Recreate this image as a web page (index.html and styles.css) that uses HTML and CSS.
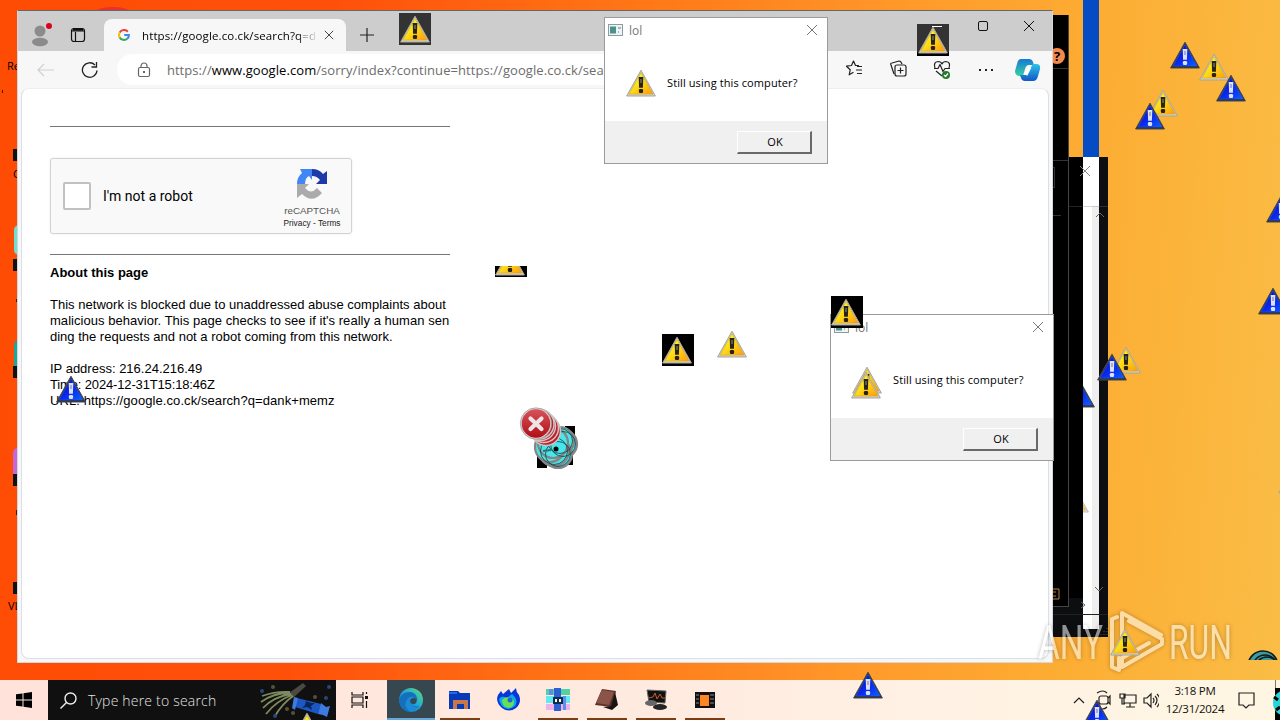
FILE: index.html
```html
<!DOCTYPE html>
<html lang="en">
<head>
	<meta charset="UTF-8">
	<title>Desktop</title>
	<link rel="stylesheet" href="styles.css">
</head><body>
<svg width="0" height="0" class="defs">
	<defs>
		<linearGradient id="gy" x1="0" y1="0" x2="1" y2="1"><stop offset=".2" stop-color="#f8ff18"/><stop offset=".55" stop-color="#ffd414"/><stop offset="1" stop-color="#ff9a10"/></linearGradient>
		<linearGradient id="gb" x1="0" y1="0" x2="1" y2="1"><stop offset=".2" stop-color="#0a10c8"/><stop offset=".6" stop-color="#0b2ff2"/><stop offset="1" stop-color="#0a60ff"/></linearGradient>
		<linearGradient id="gr" x1="0" y1="0" x2="0" y2="1"><stop offset="0" stop-color="#d8545c"/><stop offset="1" stop-color="#b00c16"/></linearGradient>
		<linearGradient id="ge" x1="0" y1="1" x2="1" y2="0"><stop offset="0" stop-color="#0c5fb5"/><stop offset=".5" stop-color="#1fa2dc"/><stop offset="1" stop-color="#5fe070"/></linearGradient>
		<linearGradient id="gc1" x1="0" y1="0" x2="0" y2="1"><stop offset="0" stop-color="#1778d8"/><stop offset="1" stop-color="#35d1a0"/></linearGradient>
		<linearGradient id="gc2" x1="0" y1="0" x2="0" y2="1"><stop offset="0" stop-color="#2cc4e8"/><stop offset="1" stop-color="#1257c8"/></linearGradient>
		<symbol id="warn" viewBox="0 0 32 32">
			<path d="M16 3.2 30.4 29H1.6z" fill="#d2cec2" stroke="#aaa69a" stroke-width="1" stroke-linejoin="round"/>
			<path d="M16 5.8 28 27H4z" fill="url(#gy)" stroke="#d09c10" stroke-width=".5"/>
			<path d="M13.700 10h4.600l-.4 10.800h-3.800z" fill="#26231a"/><path d="M15 12h2v4h-2z" fill="#5c584a"/>
			<rect x="13.900" y="22" width="4.200" height="4" rx="1.200" fill="#26231a"/>
		</symbol>
		<symbol id="inv" viewBox="0 0 32 32">
			<path d="M16 3.2 30.4 29H1.6z" fill="#2b2f3c" stroke="#45484f" stroke-width="1" stroke-linejoin="round"/>
			<path d="M16 5.8 28 27H4z" fill="url(#gb)" stroke="#2f63ef" stroke-width=".5"/>
			<path d="M13.700 10h4.600l-.4 10.800h-3.800z" fill="#dde1f4"/><path d="M15 12h2v4h-2z" fill="#a5abd4"/>
			<rect x="13.900" y="22" width="4.200" height="4" rx="1.200" fill="#dde1f4"/>
		</symbol>
		<symbol id="x" viewBox="0 0 12 12"><path d="M1 1 11 11M11 1 1 11" fill="none" stroke="currentColor"/></symbol>
		<symbol id="app" viewBox="0 0 15 12">
			<rect x=".5" y=".5" width="14" height="11" fill="#eef4f5" stroke="#8d9c9e"/>
			<rect x="2" y="2.5" width="6" height="7" fill="#4a9290"/><path d="M10 3h3v2h-3zM10 7h1v2h-1z" fill="#a8b8ba"/>
		</symbol>
	</defs>
</svg>

<div class="desktop">
	<div class="stripe"></div>
	<div class="icon-labels">
		<i class="profile-dot"></i>
		<span class="l1">Re</span><span class="l2">C</span><span class="l3">VL</span>
		<i class="sc s1"></i><i class="blob b1"></i><i class="sc s2"></i><i class="blob b2"></i><i class="sc s3"></i><i class="blob b3"></i><i class="sc s4"></i><i class="sc s5"></i>
		<i class="tick k1"></i><i class="tick k2"></i><i class="tick k3"></i>
	</div>

	<!-- windows left behind the browser -->
	<div class="win dark2">
		<i class="strip"></i><i class="scroll"></i><i class="rule"></i>
		<svg class="layer" width="56" height="480" fill="none">
			<path d="M28 9l10 10m0-10-10 10" stroke="#888"/>
			<path d="M44 60l4-4 4 4M43 430l4 4 4-4M29 445l4 3-4 3" stroke="#666"/>
			<path d="M0 457.500h56" stroke="#222"/>
			<path d="M49 478v-2m3 2v-6m3 6v-9" stroke="#555" stroke-dasharray="1 2"/>
		</svg>
	</div>
	<div class="win dark1"><b class="help">?</b><i class="rule r1"></i><i class="rule r2"></i><i class="box"></i><i class="rule r3"></i>
		<svg class="list" width="20" height="12" fill="none"><path d="M0 1h19v10H0M8 4h8M8 8h8" stroke="#b87a38"/></svg>
	</div>

	<div class="win browser">
		<div class="tabs">
			<svg class="profile" width="26" height="26"><circle cx="11" cy="9" r="5.5" fill="#8b8b8b"/><ellipse cx="11" cy="20" rx="8" ry="4.2" fill="#8b8b8b"/><circle cx="20" cy="4" r="3" fill="#d8041c"/></svg>
			<svg class="workspace" width="16" height="16" fill="none" stroke="#111" stroke-width="1.2"><rect x="1.5" y="1.5" width="13" height="13" rx="2.5"/><path d="M1.5 4h13M5.5 5v9" /><path d="M3 2.5h10" stroke-width="2.5"/></svg>
			<div class="tab">
				<svg width="12" height="12" viewBox="0 0 12 12" fill="none" stroke-width="2.1"><path d="M9.8 2.7A5 5 0 0 0 1.7 3.6" stroke="#ea4335"/><path d="M1.7 3.6A5 5 0 0 0 1.7 8.4" stroke="#fbbc05"/><path d="M1.7 8.4A5 5 0 0 0 9.2 9.8" stroke="#34a853"/><path d="M9.2 9.8A5 5 0 0 0 10.9 6H6.2" stroke="#4285f4"/></svg>
				<span class="tab-title">https://google.co.ck/search?q=d</span>
				<svg width="10" height="10" class="tab-x"><use href="#x"/></svg>
			</div>
			<svg class="plus" width="14" height="14" stroke="#222"><path d="M7 0v14M0 7h14" stroke-width="1.2"/></svg>
			<svg class="max" width="10" height="10" fill="none" stroke="#111"><rect x=".5" y=".5" width="9" height="9" rx="1.5"/></svg>
			<svg class="close" width="12" height="12"><use href="#x"/></svg>
		</div>
		<div class="toolbar">
			<svg class="back" width="17" height="14" fill="none" stroke="#d0d0d0" stroke-width="1.2"><path d="M17 7H1M7 1 1 7l6 6"/></svg>
			<svg class="reload" width="18" height="18" fill="none" stroke="#222" stroke-width="1.3"><path d="M16 9.5A7.3 7.3 0 1 1 14 4M15.5 1v5h-5"/></svg>
			<div class="address">
				<svg width="14" height="16" fill="none" stroke="#666" stroke-width="1.2"><rect x="1.5" y="5.5" width="11" height="9" rx="1.5"/><path d="M4 5V4a3 3 0 0 1 6 0v1"/><path d="M6 10h2" stroke-width="2"/></svg>
				<span class="url">https://<b>www.google.com</b>/sorry/index?continue=https://google.co.ck/sear</span>
			</div>
			<svg class="tools" width="210" height="32" fill="none" stroke="#222" stroke-width="1.2" stroke-linejoin="round">
				<path d="M16 9.500h-3.500L10.500 5 8.500 9.500l-5 .700 3.700 3.600-1 5 4.300-2.500M14 10.500h5M13 14h6M14 17.500h5"/>
				<path d="M51 18l-3-9q-1-2 1-2l7-2q2 0 3 3"/><rect x="52" y="9" width="11" height="11" rx="2"/><path d="M57.500 11.500v6M54.500 14.500h6"/>
				<path d="M92 12q-2-6 3-6.500 3 0 4 2.500 1-2.500 4-2.500 5 .500 3 6.500M91 12.500h4l2-4 3 7 2-3h5M93 15l6 5"/>
				<circle cx="103" cy="19" r="4" fill="#237c2a" stroke="none"/><path d="M101 19l1.500 1.500 2.500-3" stroke="#fff"/>
				<path d="M136 14h2m4 0h2m4 0h2" stroke-width="2"/>
				<path d="M178 3h8q3 0 4 3l1 3h-5q-3 0-4 4l-2 7h-3q-5 0-5-5l2-7q1-5 4-5z" fill="url(#gc1)" stroke="none"/>
				<path d="M190 8h3q5 0 4 5l-2 7q-1 5-5 5h-8q-3 0-4-3l-1-3h5q2 0 3-3z" fill="url(#gc2)" stroke="none"/>
				<path d="M187 11l-4 8" stroke="#fff" stroke-width="3"/>
			</svg>
		</div>
		<div class="page">
			<div class="content">
				<hr>
				<div class="captcha">
					<i class="check"></i><span class="robot">I'm not a robot</span>
					<div class="brand">
						<svg width="32" height="32" viewBox="0 0 32 32">
							<path d="M31 3v13H20l4-4q-3-4-8-4V1q7 0 11 5z" fill="#1c3aa9"/>
							<path d="M4 1h12v11l-3-4q-4 2-4 8H1q0-7 5-11z" fill="#4285f4"/>
							<path d="M1 16h12l-4 4q6 7 12 0l5 5q-10 11-20 1l-5 4z" fill="#ababab"/>
						</svg>
						<div class="name">reCAPTCHA</div>
						<div class="terms">Privacy - Terms</div>
					</div>
				</div>
				<hr>
				<div class="about"><b>About this page</b><br><br>
					<span class="t1">This network is blocked due to unaddressed abuse complaints about</span><br>
					<span class="t2">malicious behavior. This page checks to see if it's really a human sen</span><br>
					<span class="t3">ding the requests and not a robot coming from this network.</span><br><br>
					<span class="t4">IP address: 216.24.216.49</span><br>
					<span class="t5">Time: 2024-12-31T15:18:46Z</span><br>
					<span class="t6">URL: https://google.co.ck/search?q=dank+memz</span>
				</div>
			</div>
		</div>
	</div>

	<div class="win dialog d1">
		<div class="caption"><svg width="15" height="12"><use href="#app"/></svg><span>lol</span><svg class="cx" width="12" height="12"><use href="#x"/></svg></div>
		<div class="msg"><svg width="32" height="32"><use href="#warn"/></svg><span>Still using this computer?</span></div>
		<div class="foot"><div class="ok">OK</div></div>
	</div>
	<div class="win dialog d2">
		<div class="caption"><svg width="15" height="12"><use href="#app"/></svg><span>lol</span><svg class="cx" width="12" height="12"><use href="#x"/></svg></div>
		<div class="msg"><svg width="32" height="32"><use href="#warn"/></svg><span>Still using this computer?</span></div>
		<div class="foot"><div class="ok">OK</div></div>
	</div>

	<div class="taskbar">
		<div class="start"><svg width="16" height="16"><path d="M0 2.300 6.500 1.400V7.500H0zM7.500 1.200 16 0v7.500H7.500zM0 8.500h6.500v6.100L0 13.700zM7.500 8.500H16V16l-8.500-1.200z"/></svg></div>
		<div class="search">
			<svg width="17" height="17" fill="none" stroke="#eee" stroke-width="1.400"><circle cx="10.500" cy="6.500" r="5.500"/><path d="M6.500 10.500.500 16.500"/></svg>
			<span>Type here to search</span>
			<svg class="art" width="78" height="38">
				<path d="M31 12 45 2l3 3-13 12z" fill="#4a4a42"/>
				<path d="M32 12Q15 12 3 21M33 13Q15 16 5 27M34 14Q18 20 8 33M35 15Q24 23 17 35M32 11Q18 10 4 15" fill="none" stroke="#7d8a5c" stroke-width="1.800"/>
				<path d="M39 17l24 6-3 10-23-7z" fill="#1c58c4"/><path d="M36 16l4 1-3 12-3-2zM63 22l5 4 4-1-3 11-4-2-5-1z" fill="#3d7be0"/><path d="M48 20l5 2 4 0-4 3 1 4-5-3-5 1 3-3z" fill="#08265c"/>
				<g fill="#25477c"><circle cx="4" cy="10" r="2"/><circle cx="71" cy="6" r="2"/><circle cx="68" cy="17" r="2"/><circle cx="17" cy="35" r="2"/></g><g fill="#5a5038"><circle cx="15" cy="6" r="2"/><circle cx="57" cy="16" r="2"/><circle cx="29" cy="28" r="2"/><circle cx="35" cy="32" r="2"/></g>
			</svg>
		</div>
		<div class="start"><svg width="18" height="16" fill="none" stroke="#111" stroke-width="1.200"><path d="M1 0v3h11V0M1 16v-3h11v3M1 5h11v6H1zM15.500 0v2M15.500 9v7"/><path d="M14 4h3v3h-3z" fill="#111" stroke="none"/></svg></div>
		<div class="apps">
			<div class="app on"><svg width="26" height="26"><circle cx="13" cy="13" r="12" fill="url(#ge)"/><path d="M1 13Q4 4 13 5q7 2 6 9H11q1 6 10 5-4 6-11 5Q3 21 1 13z" fill="#1470bd"/><path d="M11 24q-7-6-1-13 4-3 7 0-5 1-4 6 2 4 9 2-4 6-11 5z" fill="#1c8ad4"/><path d="M12 15q0-4 4-4 4 1 2 5-3 3-6-1z" fill="#304a56"/></svg></div>
			<div class="app open"><svg width="22" height="20"><path d="M0 1h9l2 2h10v16H0z" fill="#0739b8"/><path d="M0 2h8v2H0z" fill="#1e6af0"/><path d="M4 10h15v9h-4v-5H8v5H4z" fill="#c87848"/></svg></div>
			<div class="app"><svg width="26" height="24"><path d="M2 7 5 3l2 3 6-5 2 4 5-5q0 4 3 7 3 8-3 13-7 5-14 0Q-1 14 2 7z" fill="#0836d8"/><path d="M3 11q2-3 6-2l2 1 5-4q7 6 3 12-7 6-13 0-3-4-3-7z" fill="#08a8ef"/><path d="M6 12q4-5 11-1 3 7-4 9-7-1-7-8z" fill="#69df55"/><circle cx="14" cy="12" r="2.500" fill="#2067d0"/></svg></div>
			<div class="app open"><svg width="24" height="24"><path d="M0 1h24v6H0z" fill="#50d2a5"/><path d="M0 8h24v7H0z" fill="#60e8f5"/><path d="M0 16h24v6H0z" fill="#edb0e8"/><path d="M8 0h7v23H8z" fill="#2e60d4"/><path d="M3 1h4v6H3zM17 8h3v14h-3z" fill="#5f8dea"/><path d="M7 9h10v7H7z" fill="#112c48"/><path d="M9 11h2v3H9zm4 0h2v3h-2z" fill="#fff"/></svg></div>
			<div class="app open"><svg width="24" height="22"><path d="M7 0 21 2 17 18 0 16z" fill="#603028"/><path d="M7 1 19 3 14 16 1 14z" fill="#8a5448"/><path d="M20 3 23 16 17 21 8 18 16 17z" fill="#191515"/></svg></div>
			<div class="app open"><svg width="24" height="22"><path d="M3 1 22 2 21 14 5 13z" fill="#111" stroke="#666"/><path d="M5 9l4-1 2-4 2 6 3-5 2 4h3" fill="none" stroke="#c65b2c"/><ellipse cx="7" cy="14" rx="6" ry="3" fill="#666"/><ellipse cx="16" cy="18" rx="7" ry="3" fill="#242424"/></svg></div>
			<div class="app open"><svg width="20" height="16"><path d="M0 0h20v16H0z" fill="#111"/><path d="M5 3h9v11H5z" fill="#ff8522"/><path d="M1 3h3M1 7h3M1 11h3M15 3h4M15 7h4M15 11h4" stroke="#888"/></svg></div>
		</div>
		<div class="tray">
			<svg width="86" height="20" fill="none" stroke="#222" stroke-width="1.200"><path d="M1 13l5-5 5 5M24 3q6-4 10 0M24 17q6 4 10 0M35 8l2-2v8l-2-2"/><rect x="26" y="6" width="9" height="8" rx="2"/><path d="M51 5h12v8H51zM57 13v4M53 17h9M47 4h5v4h-5zM49 8v6h3"/><path d="M71 8h3l4-4v13l-4-4h-3zM80 8q2 2 0 5M82 6q4 4 0 9M84 4q6 6 0 13"/></svg>
			<div class="clock">3:18 PM<br>12/31/2024</div>
			<svg class="note" width="17" height="17" fill="none" stroke="#222" stroke-width="1.200"><path d="M1 1h15v12h-5l-3 3-3-3H1z"/></svg>
		</div>
		<i class="end"></i>
	</div>

	<svg class="layer sprites" width="1280" height="720">
		<g class="watermark">
			<text x="1038" y="659" textLength="65" lengthAdjust="spacingAndGlyphs">ANY</text>
			<text x="1169" y="659" textLength="63" lengthAdjust="spacingAndGlyphs">RUN</text>
			<path d="M1122 646V613l39 22M1122 667l40-23v-5l-33-18M1122 667v-9l27-15M1117 617l-5 2v48l7 3v-12"/>
		</g>
		<clipPath id="c1"><path d="M495 266h32v11h-32z"/></clipPath>
		<clipPath id="c2"><path d="M1083 370h30v50h-30z"/></clipPath>
		<clipPath id="c3"><path d="M1083 490h30v50h-30z"/></clipPath>
		<clipPath id="c4"><path d="M1240 640h40v20h-40z"/></clipPath>
		<path d="M399 13h32v32h-32zM917 24h32v28h-32z" fill="#333"/>
		<path d="M495 266h32v11h-32zM662 334h32v32h-32zM831 296h32v32h-32zM917 52h32v4h-32z"/>
		<path d="M932 26.500h10" stroke="#fff"/>
		<g class="yellow">
			<use href="#warn" x="399" y="13" width="32" height="32"/>
			<use href="#warn" x="917" y="24" width="32" height="32"/>
			<g clip-path="url(#c1)"><use href="#warn" x="494" y="246" width="32" height="32"/></g>
			<use href="#warn" x="661" y="334" width="32" height="32"/>
			<use href="#warn" x="716" y="328" width="32" height="32"/>
			<use href="#warn" x="830" y="296" width="32" height="32"/>
			<use href="#warn" x="850" y="369" width="32" height="32"/>
			<use href="#warn" x="1198" y="51" width="32" height="32"/>
			<use href="#warn" x="1147" y="87" width="32" height="32"/>
			<use href="#warn" x="1110" y="344" width="32" height="32"/>
			<use href="#warn" x="1109" y="626" width="32" height="32"/>
			<use href="#warn" x="291" y="710" width="32" height="32"/>
			<use href="#warn" x="1277" y="464" width="32" height="32"/>
			<g clip-path="url(#c3)" opacity=".7"><use href="#warn" x="1058" y="483" width="32" height="32"/></g>
		</g>
		<g class="blue">
			<use href="#inv" x="1169" y="39" width="32" height="32"/>
			<use href="#inv" x="1215" y="72" width="32" height="32"/>
			<use href="#inv" x="1134" y="100" width="32" height="32"/>
			<use href="#inv" x="1265" y="193" width="32" height="32"/>
			<use href="#inv" x="1257" y="285" width="32" height="32"/>
			<use href="#inv" x="1096" y="351" width="32" height="32"/>
			<g clip-path="url(#c2)"><use href="#inv" x="1064" y="378" width="32" height="32"/></g>
			<use href="#inv" x="55" y="373" width="32" height="32"/>
			<use href="#inv" x="852" y="669" width="32" height="32"/>
			<use href="#inv" x="1081" y="697" width="32" height="32"/>
		</g>
		<!-- trail of error icons, cyan ones are inverted -->
		<path d="M537 456h10v12h-10zM565 426h10v12h-10zM564 455h9v10h-9z"/>
		<g fill="#48e6ea" stroke="#858585" stroke-width="2.200">
			<circle cx="563" cy="444" r="14"/><circle cx="560" cy="441" r="14"/><circle cx="558" cy="454" r="14"/><circle cx="554" cy="451" r="15"/><circle cx="550" cy="447" r="15"/><circle cx="553" cy="443" r="15"/>
		</g>
		<g fill="none" stroke="#163c40" stroke-width=".8"><circle cx="563" cy="444" r="12.500"/><circle cx="560" cy="441" r="12.500"/><circle cx="558" cy="454" r="12.500"/><circle cx="554" cy="451" r="13.500"/></g>
		<circle cx="556" cy="449" r="2.500"/><path d="M543 451l8-1" stroke="#376d73" stroke-width="2"/>
		<g fill="#bd1e2a" stroke="#cfc4c4" stroke-width="1.500">
			<circle cx="546" cy="431" r="14.500"/><circle cx="544" cy="428" r="14.500"/><circle cx="541" cy="426" r="14.500"/><circle cx="539" cy="424" r="15"/>
		</g>
		<circle cx="536" cy="423.500" r="15" fill="url(#gr)" stroke="#d7d2d2" stroke-width="1.500"/><circle cx="536" cy="423.500" r="15.700" fill="none" stroke="#8f8888" stroke-width=".6"/>
		<path d="M530.500 418.500l11 10.500m0-10.500-11 10.500" stroke="#eee6e6" stroke-width="4.200" stroke-linecap="round"/>
		<g clip-path="url(#c4)" fill="#3b9ca4" stroke="#101818" stroke-width="1.600"><circle cx="1263" cy="666" r="15"/><circle cx="1265" cy="667" r="12"/><circle cx="1267" cy="669" r="12"/></g>
		<g><path d="M1275 688h5v32h-5z"/><circle cx="1286" cy="703" r="13" fill="#25d6d9"/><path d="M1274 697l4 3M1276 710l4-3" stroke="#000" stroke-width="3"/></g>
	</svg>
</div>
</body></html>
```

FILE: styles.css
```css
body { margin:0; overflow:hidden; }
.desktop { position:relative; width:1280px; height:720px; overflow:hidden; font-family:"Open Sans", "Noto Sans", sans-serif; background:linear-gradient(94deg, #ff4c04 0%, #ff500a 25%, #ff7a18 50%, #ff9c2c 70%, #fcae34 84%, #fabd46 100%); }
.defs, .layer, .win, .stripe { position:absolute; }
.layer { left:0; top:0; }
.stripe { left:1083px; top:0; width:16px; height:157px; background:#044bc4; }

/* pieces of the desktop icons that stick out on the left */
.icon-labels span, .icon-labels i { position:absolute; font-size:11px; }
.l1 { left:7px; top:58px; }
.l2 { left:13px; top:166px; }
.l3 { left:8px; top:598px; }
.profile-dot { left:96px; top:7px; width:34px; height:10px; border-radius:50%; background:#e8332a; }
.sc { left:13px; width:8px; height:12px; background:#111; }
.s1 { top:149px; }
.s2 { top:259px; }
.s3 { top:366px; }
.s4 { top:474px; }
.s5 { top:582px; }
.blob { left:14px; width:10px; height:30px; border-radius:8px; background:#6fe0d0; }
.b1 { top:225px; }
.b2 { top:340px; background:#1ba79c; }
.b3 { top:448px; background:#c667d8; left:13px; }
.tick { width:1px; height:3px; background:#222; }
.k1 { left:2px; top:90px; }
.k2 { left:16px; top:299px; }
.k3 { left:16px; top:510px; height:5px; }

.dark1 { left:1040px; top:15px; width:28px; height:591px; background:#000; border-right:1px solid #444; border-bottom:1px solid #444; }
.dark1 .help { position:absolute; left:9px; top:33px; width:16px; height:16px; border-radius:50%; background:#f38a4c; font-size:13px; line-height:16px; text-align:center; }
.list { position:absolute; left:0; top:573px; }
.rule { position:absolute; left:0; right:0; height:1px; background:#333; }
.r1 { top:53px; }
.r2 { top:145px; }
.r3 { top:200px; right:7px; }
.box { position:absolute; left:0; top:152px; width:15px; height:21px; border:1px solid #333; box-sizing:border-box; }
.dark2 { left:1052px; top:157px; width:56px; height:480px; background:#0c0e10; }
.dark2:before { content:""; position:absolute; left:0; top:0; width:31px; height:441px; background:#000; }
.dark2 .strip { position:absolute; left:31px; top:0; width:16px; height:472px; background:#fff; }
.dark2 .scroll { position:absolute; left:40px; top:49px; width:7px; height:423px; background:#eee; }
.dark2 .rule { top:49px; left:16px; opacity:.3; background:#777; }

.browser { left:17px; top:10px; width:1036px; height:653px; box-sizing:border-box; border:1px solid #d5d7da; border-top-color:#666; background:#f7f7f7; display:flex; flex-direction:column; }
.tabs { height:40px; background:#cdcdcd; display:flex; align-items:center; }
.tabs .profile { margin:8px 0 0 11px; }
.workspace { margin:8px 0 0 15px; }
.tab { position:relative; display:flex; align-items:center; align-self:flex-end; width:242px; height:32px; margin-left:18px; padding-left:14px; box-sizing:border-box; background:#f7f7f7; border-radius:8px 8px 0 0; }
.tab-title { width:176px; margin-left:12px; font-size:11.5px; white-space:nowrap; overflow:hidden; -webkit-mask:linear-gradient(90deg, #000 88%, transparent); letter-spacing:.12px; }
.tab-x { margin-left:6px; color:#222; }
.plus { margin:8px 0 0 14px; }
.max { margin:-10px 0 0 604px; }
.close { margin:-10px 0 0 35px; color:#111; }
.toolbar { height:37px; display:flex; align-items:center; }
.back { margin-left:19px; }
.reload { margin-left:27px; }
.address { display:flex; align-items:center; width:700px; height:31px; margin-left:18px; padding-left:20px; box-sizing:border-box; border-radius:16px; background:#fff; }
.url { margin-left:16px; font-size:13px; color:#6d6d6d; white-space:nowrap; letter-spacing:.07px; }
.url b { font-weight:normal; color:#000; }
.tools { margin:4px 0 0 28px; }
.page { flex:1; margin:0 3px 3px; background:#fff; border:1px solid #d9e0e8; border-top-color:#eee; border-radius:8px; box-sizing:border-box; }
.content { width:400px; margin:37px 0 0 28px; font-family:"Liberation Sans", Arial, sans-serif; }
.content hr { height:1px; margin:0; border:0; background:#777; }
.captcha { display:flex; align-items:center; width:302px; height:76px; margin:31px 0 20px; box-sizing:border-box; border:1px solid #d3d3d3; border-radius:3px; background:#f9f9f9; box-shadow:0 0 3px rgba(0,0,0,.08); }
.check { width:24px; height:24px; margin-left:12px; border:2px solid #c1c1c1; border-radius:2px; background:#fff; }
.robot { margin-left:12px; font-family:Roboto, sans-serif; font-size:14px; width:178px; }
.brand { width:62px; margin-top:5px; text-align:center; white-space:nowrap; font-size:9.800px; line-height:12px; color:#555; }
.brand svg { display:block; margin:0 auto 5px; }
.terms { font-size:8.300px; color:#222; }
.about { padding-top:10px; font-size:13px; line-height:16px; white-space:nowrap; color:#000; }
.t1 { letter-spacing:.02px; }
.t2 { letter-spacing:.035px; }
.t5 { letter-spacing:-.15px; }
.t6 { letter-spacing:.08px; }

.dialog { width:224px; height:147px; box-sizing:border-box; border:1px solid #9b9b9b; background:#fff; font-size:11px; display:flex; flex-direction:column; }
.d1 { left:604px; top:17px; }
.d2 { left:830px; top:314px; }
.caption { display:flex; align-items:center; height:24px; padding:0 9px 0 3px; color:#777; }
.caption span { margin-left:6px; font-size:12px; }
.cx { margin-left:auto; }
.msg { display:flex; align-items:center; flex:1; padding:4px 0 0 20px; }
.msg svg { margin-bottom:2px; }
.msg span { margin:0 0 3px 10px; white-space:nowrap; color:#000; letter-spacing:.1px; }
.foot { height:42px; background:#f0f0f0; display:flex; justify-content:flex-end; align-items:center; padding-right:15px; }
.ok { width:75px; height:23px; box-sizing:border-box; border:1px solid #fff; border-right:2px solid #696969; border-bottom:2px solid #696969; padding-left:2px; text-align:center; line-height:20px; }

.taskbar { position:absolute; left:0; top:680px; width:1280px; height:40px; display:flex; background:linear-gradient(90deg, #ffe3da, #ffebe0 55%, #fff2e4 75%, #fef6e2); }
.start { width:48px; display:flex; align-items:center; justify-content:center; }
.search { width:288px; display:flex; align-items:center; padding-left:12px; box-sizing:border-box; background:#101010; color:#e4e4e4; font-size:14px; }
.search span { margin-left:11px; width:171px; font-weight:300; letter-spacing:.2px; }
.apps { display:flex; gap:1px; margin-left:3px; }
.app { position:relative; width:48px; display:flex; align-items:center; justify-content:center; }
.app.on { background:#36474f; box-shadow:inset 0 -2px #69a9d8; }
.app.open:after { content:""; position:absolute; left:4px; right:4px; bottom:0; height:2px; background:#7a3d14; }
.tray { display:flex; align-items:center; margin-left:auto; padding-right:25px; }
.clock { width:70px; margin-left:1px; text-align:center; font-size:11.500px; line-height:18px; letter-spacing:-.25px; color:#111; }
.note { margin-left:8px; }
.end { position:absolute; right:4px; top:0; width:1px; height:40px; background:#777; }
.watermark { opacity:.55; font-family:Roboto, sans-serif; font-size:49px; font-weight:400; fill:#fff; filter:drop-shadow(0 0 2px rgba(0,0,0,.5)); }
.watermark path { fill:none; stroke:#fff; stroke-width:4; stroke-linejoin:round; stroke-linecap:round; }
```
